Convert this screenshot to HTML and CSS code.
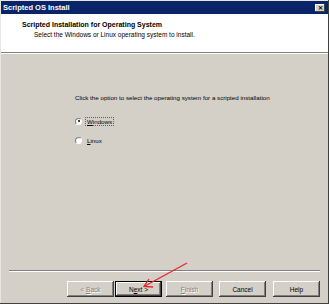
FILE: index.html
```html
<!DOCTYPE html>
<html lang="en">
<head>
<meta charset="UTF-8">
<title>Scripted OS Install</title>
<link rel="stylesheet" href="styles.css">
</head>
<body>
  <div class="window">
    <div class="titlebar">
      <span class="title">Scripted OS Install</span>
      <span class="close">&#x2715;</span>
    </div>
    <div class="header">
      <div class="header-title">Scripted Installation for Operating System</div>
      <div class="header-sub">Select the Windows or Linux operating system to install.</div>
    </div>
    <div class="etched"></div>
    <div class="content">
      <p class="prompt">Click the option to select the operating system for a scripted installation</p>
      <label class="option">
        <span class="radio checked"></span>
        <span class="focus"><u>W</u>indows</span>
      </label>
      <label class="option">
        <span class="radio"></span>
        <span class="label"><u>L</u>inux</span>
      </label>
    </div>
    <div class="footer">
      <div class="etched line"></div>
      <div class="buttons">
        <button class="btn disabled back">&lt; <u>B</u>ack</button>
        <button class="btn default next">N<u>e</u>xt &gt;</button>
        <button class="btn disabled finish"><u>F</u>inish</button>
        <button class="btn cancel">Cancel</button>
        <button class="btn help">Help</button>
      </div>
    </div>
    <svg class="arrow" width="60" height="40" viewBox="0 0 60 40">
      <line x1="52" y1="5" x2="10" y2="28" stroke="#e8262b" stroke-width="1.3"/>
      <polyline points="14,21 9,28.5 18,29" fill="none" stroke="#e8262b" stroke-width="1.3"/>
    </svg>
  </div>
</body>
</html>
```

FILE: styles.css
```css
body {
  margin: 0;
  font-family: "Liberation Sans", Arial, sans-serif;
  font-size: 6px;
  color: #000;
}

.window {
  position: relative;
  width: 329px;
  height: 304px;
  box-sizing: border-box;
  padding: 1px 1px 2px 1px;
  background: #d4d0c8;
  box-shadow: inset -1px -1px #404040, inset 1px 1px #e8e6e0;
  display: flex;
  flex-direction: column;
}

.titlebar {
  height: 13px;
  background: #0a246a;
  color: #fff;
  font-weight: bold;
  font-size: 7.5px;
  display: flex;
  align-items: center;
  justify-content: space-between;
  padding: 0 3px 0 2px;
}

.close {
  width: 10px;
  height: 8px;
  background: #d4d0c8;
  color: #000;
  font-size: 6px;
  line-height: 8px;
  text-align: center;
  box-shadow: inset -1px -1px #404040, inset 1px 1px #fff;
}

.header {
  height: 38px;
  background: #fff;
  box-sizing: border-box;
  padding: 7px 0 0 21px;
}

.header-title {
  font-weight: bold;
  font-size: 7px;
}

.header-sub {
  margin: 3px 0 0 12px;
  font-size: 6.5px;
}

.etched {
  height: 0;
  border-top: 1px solid #808080;
  border-bottom: 1px solid #fff;
}

.content {
  flex: 1;
  padding: 40px 0 0 74px;
  font-size: 6.2px;
}

.prompt {
  margin: 0 0 15px 0;
}

.option {
  display: flex;
  align-items: center;
  height: 10px;
  margin-bottom: 9px;
}

.radio {
  width: 7px;
  height: 7px;
  box-sizing: border-box;
  border-radius: 50%;
  background: #fff;
  border: 1px solid;
  border-color: #808080 #fff #fff #808080;
  margin-right: 4px;
  position: relative;
}

.radio.checked::after {
  content: "";
  position: absolute;
  left: 1.5px;
  top: 1.5px;
  width: 2px;
  height: 2px;
  border-radius: 50%;
  background: #000;
}

.focus {
  border: 1px dotted #606060;
  padding: 0 1px;
  line-height: 7px;
  margin-left: -1px;
}

.label {
  margin-left: 1px;
}

.footer {
  padding: 0 8px 5px 8px;
}

.buttons {
  display: flex;
  justify-content: flex-end;
  margin-top: 9px;
}

.btn {
  width: 47px;
  height: 16px;
  padding: 0;
  border: none;
  background: #d4d0c8;
  font-family: "Liberation Sans", Arial, sans-serif;
  font-size: 6.5px;
  color: #000;
  box-shadow: inset -1px -1px #404040, inset 1px 1px #fff, inset -2px -2px #808080;
}

.btn.disabled {
  color: #808080;
  text-shadow: 1px 1px #fff;
}

.btn.default {
  box-shadow: inset 0 0 0 1px #000, inset -2px -2px #404040, inset 2px 2px #fff, inset -3px -3px #808080;
}

.next {
  margin-left: 1px;
}

.finish {
  margin-left: 4px;
}

.cancel {
  margin-left: 6px;
}

.help {
  margin-left: 7px;
}

.arrow {
  position: absolute;
  left: 135px;
  top: 258px;
}
```
